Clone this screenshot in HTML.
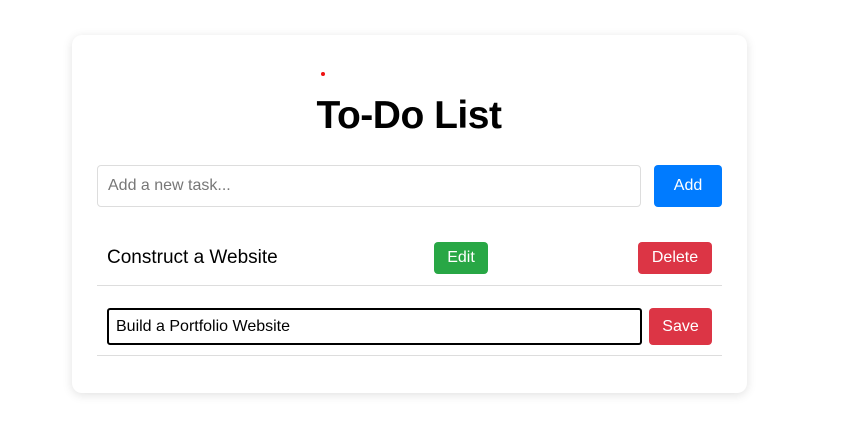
<!DOCTYPE html>
<html><head><style>
body{margin:0;width:847px;height:447px;background:#fff;font-family:"Liberation Sans",sans-serif;position:relative;overflow:hidden}
.card{position:absolute;left:72px;top:35px;width:675px;height:358px;background:#fff;border-radius:10px;box-shadow:0 2px 10px rgba(0,0,0,0.12)}
.a{position:absolute;box-sizing:border-box}
.btn{color:#fff;font-size:16px;display:flex;align-items:center;justify-content:center;border-radius:4px}
</style></head><body>
<div class="card"></div>
<div class="a" style="left:321px;top:72px;width:4px;height:4px;border-radius:50%;background:#e11"></div>
<div class="a" style="left:0;width:818px;top:90px;text-align:center;font-size:39px;font-weight:bold;line-height:52px;letter-spacing:-0.5px">To-Do List</div>
<div class="a" style="left:97px;top:165px;width:544px;height:42px;border:1px solid #ddd;border-radius:4px;font-size:16px;color:#777;padding:11px 0 0 10px">Add a new task...</div>
<div class="a btn" style="left:654px;top:165px;width:68px;height:42px;background:#007bff">Add</div>
<div class="a" style="left:107px;top:247px;font-size:19px;line-height:22px">Construct a Website</div>
<div class="a btn" style="left:434px;top:242px;width:54px;height:32px;background:#28a745">Edit</div>
<div class="a btn" style="left:638px;top:242px;width:74px;height:32px;background:#dc3545">Delete</div>
<div class="a" style="left:97px;top:285px;width:625px;height:1px;background:#ddd"></div>
<div class="a" style="left:107px;top:308px;width:535px;height:37px;border:2px solid #000;border-radius:3px;font-size:16px;padding:8px 0 0 7px">Build a Portfolio Website</div>
<div class="a btn" style="left:649px;top:308px;width:63px;height:37px;background:#dc3545">Save</div>
<div class="a" style="left:97px;top:355px;width:625px;height:1px;background:#ddd"></div>
</body></html>
